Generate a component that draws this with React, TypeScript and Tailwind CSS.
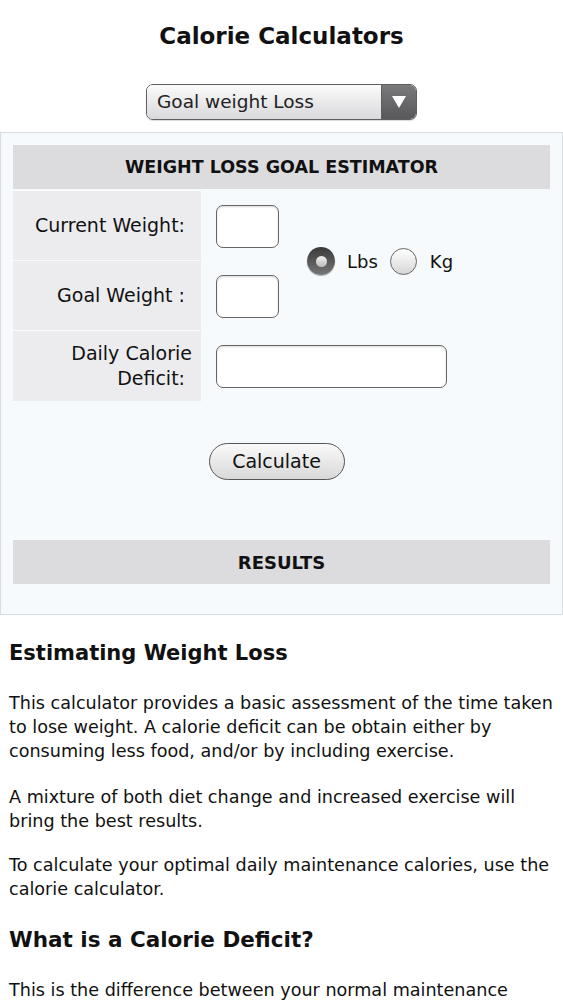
import React from 'react';

const font = { fontFamily: '"DejaVu Sans", Verdana, sans-serif' };

const SelectBox: React.FC = () => (
  <div className="mx-auto flex h-[36px] w-[271px] overflow-hidden rounded-[7px] border border-[#5f5f5f] shadow-[0_1px_1px_rgba(0,0,0,0.15)]">
    <div className="flex flex-1 items-center bg-gradient-to-b from-[#fbfbfb] to-[#d9d9dc] pl-[10px] text-[18.5px] text-[#222]">
      Goal weight Loss
    </div>
    <div className="flex w-[35px] items-center justify-center border-l border-[#5f5f5f] bg-gradient-to-b from-[#7a7a7c] to-[#58585a]">
      <svg width="16" height="14" viewBox="0 0 16 14">
        <path d="M1 1h14L8 13z" fill="#fff" />
      </svg>
    </div>
  </div>
);

const Radio: React.FC<{ checked?: boolean }> = ({ checked }) =>
  checked ? (
    <span className="flex h-[28px] w-[28px] shrink-0 items-center justify-center rounded-full bg-gradient-to-b from-[#3a3a3a] to-[#777] shadow-[0_1px_1px_rgba(0,0,0,0.3)]">
      <span className="h-[11px] w-[11px] rounded-full bg-gradient-to-b from-[#f2f2f2] to-[#bbb]" />
    </span>
  ) : (
    <span className="block h-[27px] w-[27px] shrink-0 rounded-full border border-[#666] bg-gradient-to-b from-[#fff] to-[#d6d6d6]" />
  );

const TextBox: React.FC<{ wide?: boolean }> = ({ wide }) => (
  <div
    className={`${wide ? 'w-[231px]' : 'w-[63px]'} h-[43px] rounded-[7px] border-[1.5px] border-[#666] bg-white shadow-[inset_0_1px_2px_rgba(0,0,0,0.15)]`}
  />
);

const Label: React.FC<{ children: React.ReactNode; tall?: boolean }> = ({ children, tall }) => (
  <div
    className={`flex ${tall ? 'h-[70px]' : 'h-[69px]'} items-center justify-end bg-[#ececef] pr-[16px] text-right text-[19px] leading-[25px]`}
  >
    <span>{children}</span>
  </div>
);

export default function App() {
  return (
    <div className="min-h-screen bg-white text-[#111]" style={font}>
      <h1 className="pt-[22px] text-center text-[23px] font-bold leading-[28px]">Calorie Calculators</h1>
      <div className="mt-[34px]">
        <SelectBox />
      </div>

      <div className="mt-[12px] border border-[#d9dde0] bg-[#f6fafc] px-[12px] pt-[12px] pb-[30px]">
        <div className="flex h-[44px] items-center justify-center bg-[#dcdcdf] text-[17.5px] font-bold">
          WEIGHT LOSS GOAL ESTIMATOR
        </div>

        <div className="mt-[2px] flex">
          <div className="flex w-[188px] flex-col gap-[1px]">
            <Label>Current Weight:</Label>
            <Label>Goal Weight :</Label>
            <Label tall>
              <span className="mr-[-7px] block">Daily Calorie</span>
              <span className="block">Deficit:</span>
            </Label>
          </div>
          <div className="flex flex-1 flex-col pl-[15px]">
            <div className="flex h-[140px] items-center">
              <div className="flex flex-col gap-[27px]">
                <TextBox />
                <TextBox />
              </div>
              <div className="ml-[28px] flex items-center text-[18px]">
                <Radio checked />
                <span className="ml-[12px]">Lbs</span>
                <span className="ml-[12px] flex">
                  <Radio />
                </span>
                <span className="ml-[13px]">Kg</span>
              </div>
            </div>
            <div className="flex h-[70px] items-center">
              <TextBox wide />
            </div>
          </div>
        </div>

        <div className="mt-[42px] flex justify-center pr-[10px]">
          <button className="h-[37px] w-[136px] rounded-full border border-[#555] bg-gradient-to-b from-[#fafafa] to-[#d8d8d8] text-[19px] text-[#111]">
            Calculate
          </button>
        </div>

        <div className="mt-[60px] flex h-[44px] items-center justify-center bg-[#dcdcdf] text-[18px] font-bold">
          RESULTS
        </div>
      </div>

      <div className="pl-[9px] pr-[4px]">
        <h2 className="mt-[22px] text-[21px] font-bold leading-[32px]">Estimating Weight Loss</h2>
        <p className="mt-[22px] text-[17.6px] leading-[24px]">
          This calculator provides a basic assessment of the time taken to lose weight. A calorie deficit can be obtain either by consuming less food, and/or by including exercise.
        </p>
        <p className="mt-[22px] text-[17.6px] leading-[24px]">
          A mixture of both diet change and increased exercise will bring the best results.
        </p>
        <p className="mt-[20px] text-[17.6px] leading-[24px]">
          To calculate your optimal daily maintenance calories, use the calorie calculator.
        </p>
        <h2 className="mt-[23px] text-[21.5px] font-bold leading-[32px]">What is a Calorie Deficit?</h2>
        <p className="mt-[22px] text-[17.6px] leading-[24px]">
          This is the difference between your normal maintenance calories and your daily intake.
        </p>
      </div>
    </div>
  );
}
